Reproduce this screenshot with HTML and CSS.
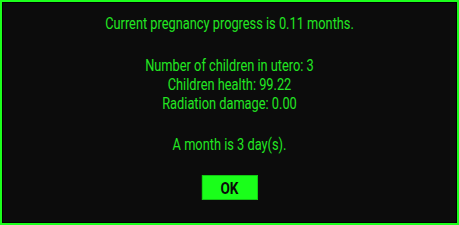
FILE: index.html
```html
<!DOCTYPE html>
<html>
<head>
<meta charset="utf-8">
<link rel="stylesheet" href="styles.css">
</head>
<body>
<div class="dialog">
  <div class="inner">
    <div class="content">
      <p class="line first">Current pregnancy progress is 0.11 months.</p>
      <div class="group">
        <p class="line">Number of children in utero: 3</p>
        <p class="line">Children health: 99.22</p>
        <p class="line">Radiation damage: 0.00</p>
      </div>
      <p class="line month">A month is 3 day(s).</p>
      <button class="ok">OK</button>
    </div>
  </div>
</div>
</body>
</html>
```
FILE: styles.css
```css
html, body {
  margin: 0;
  padding: 0;
  background: #000;
}
.dialog {
  width: 459px;
  height: 225px;
  box-sizing: border-box;
  border: 2px solid #1cff1c;
  background: #000;
}
.inner {
  height: 100%;
  box-sizing: border-box;
  border: 1px solid #000;
  background: #0c0c0c;
  padding-top: 11px;
}
.content {
  display: flex;
  flex-direction: column;
  align-items: center;
  transform: scaleX(0.8);
  transform-origin: 50% 0;
  font-family: Roboto, "Liberation Sans", sans-serif;
  font-size: 16px;
  color: #22e622;
}
.line {
  margin: 0;
  line-height: 19px;
  white-space: nowrap;
}
.group {
  margin-top: 23px;
  display: flex;
  flex-direction: column;
  align-items: center;
}
.month {
  margin-top: 22px;
}
.ok {
  margin-top: 21px;
  width: 70px;
  height: 25px;
  box-sizing: border-box;
  border: 1px solid #12c812;
  background: #1aff1a;
  color: #0a0a0a;
  font-family: Roboto, "Liberation Sans", sans-serif;
  font-weight: bold;
  font-size: 17px;
  padding: 0;
}
```
